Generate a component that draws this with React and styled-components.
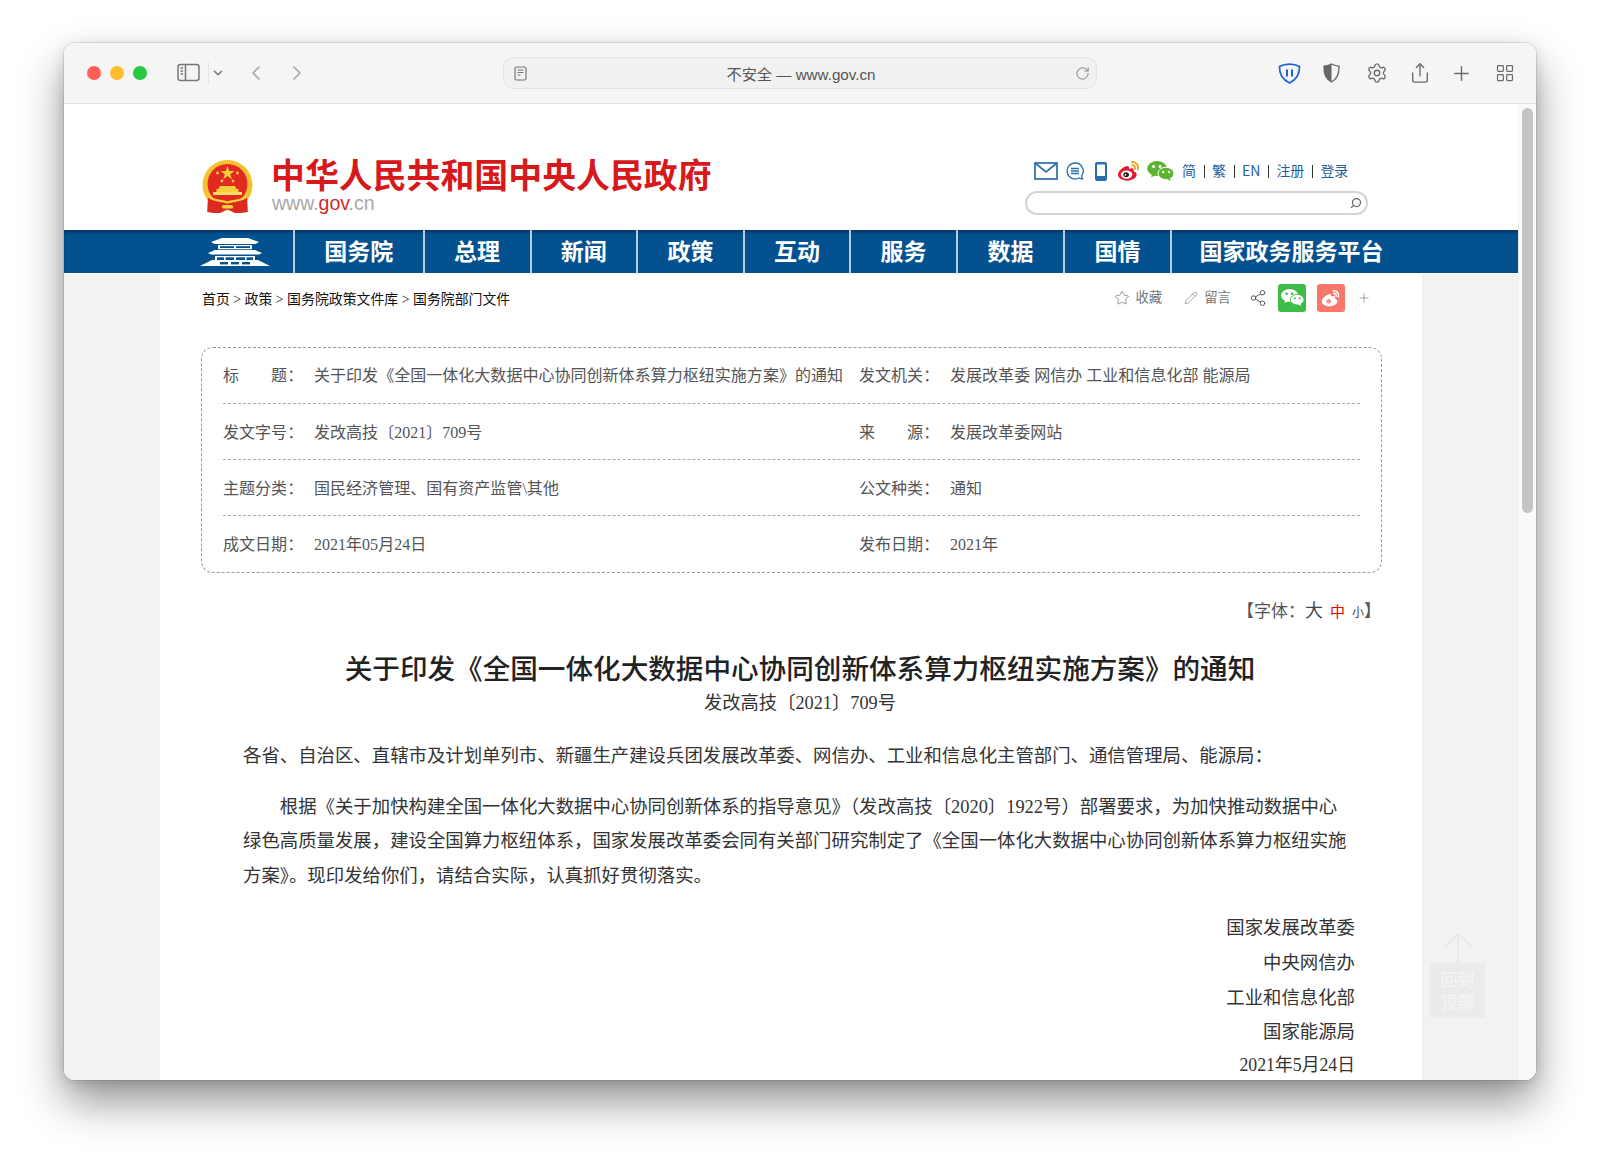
import React from 'react';
import styled, { createGlobalStyle } from 'styled-components';
import { ChevronDown, ChevronLeft, ChevronRight, RotateCw, Settings, Share, Plus, LayoutGrid, Star, Pencil, Share2, Search } from 'lucide-react';

const SERIF = '"Liberation Serif", "Noto Sans CJK SC", serif';
const SANS = '"Liberation Sans", "Noto Sans CJK SC", sans-serif';

// full-width punctuation, kept as escapes so it stays exact
const COLON = '\uFF1A';
const COMMA = '\uFF0C';
const LP = '\uFF08';
const RP = '\uFF09';

const GlobalStyle = createGlobalStyle`
  html, body {
    margin: 0;
    padding: 0;
    background: #ffffff;
  }
  * { box-sizing: border-box; }
`;

const Stage = styled.div`
  width: 1600px;
  height: 1164px;
  padding: 43px 64px 0;
  overflow: hidden;
`;

const Win = styled.div`
  position: relative;
  width: 1472px;
  height: 1037px;
  border-radius: 11px;
  overflow: hidden;
  background: #fff;
  display: flex;
  flex-direction: column;
`;

const Shadow = styled.div`
  border-radius: 11px;
  box-shadow: 0 0 0 1px rgba(0, 0, 0, 0.09), 0 22px 44px rgba(0, 0, 0, 0.42), 0 4px 14px rgba(0, 0, 0, 0.12);
`;

const Toolbar = styled.div`
  flex: none;
  height: 61px;
  background: #f5f5f5;
  border-bottom: 1px solid #dedede;
  display: grid;
  grid-template-columns: 439px 594px 1fr;
  align-items: center;
`;

const LeftTools = styled.div`
  display: flex;
  align-items: center;
  padding-left: 23px;
  color: #777;
`;

const Light = styled.span`
  width: 14px;
  height: 14px;
  border-radius: 50%;
  margin-right: 9px;
  background: ${p => p.$color};
`;

const SidebarBtn = styled.svg`
  margin-left: 21px;
  width: 24px;
  height: 20px;
`;

const VSep = styled.span`
  width: 1px;
  height: 22px;
  background: #e4e4e4;
  margin: 0 2px 0 7px;
`;

const NavArrow = styled.span`
  display: flex;
  color: #a9a9a9;
  margin-left: ${p => p.$ml}px;
`;

const AddressBar = styled.div`
  position: relative;
  height: 32px;
  border: 1px solid #e2e2e2;
  border-radius: 10px;
  background: #f1f1f1;
  display: flex;
  align-items: center;
  justify-content: space-between;
  padding: 0 6px 0 10px;
  color: #777;
`;

const AddressText = styled.span`
  font: 15.2px ${SANS};
  color: #555;
  white-space: nowrap;
`;

const RightTools = styled.div`
  display: flex;
  justify-content: flex-end;
  padding-right: 9px;
  color: #6b6b6b;
`;

const ToolCell = styled.span`
  width: 43.5px;
  display: flex;
  justify-content: center;
  align-items: center;
  transform: translateX(${p => p.$dx || 0}px);
`;

const Body = styled.div`
  flex: 1;
  min-height: 0;
  display: flex;
`;

const Page = styled.div`
  flex: 1;
  min-width: 0;
  overflow: hidden;
  background: #fff;
`;

const ScrollTrack = styled.div`
  flex: none;
  width: 18px;
  background: #fafafa;
  border-left: 1px solid #efefef;
  padding: 4px 3px 0;
`;

const ScrollThumb = styled.div`
  width: 11px;
  height: 405px;
  border-radius: 6px;
  background: #c4c4c4;
`;

const Header = styled.div`
  height: 126px;
  display: flex;
  justify-content: space-between;
  padding: 56px 150px 0 138px;
`;

const Brand = styled.div`
  display: flex;
  gap: 18px;
`;

const BrandText = styled.div`
  display: flex;
  flex-direction: column;
  margin-top: -5px;
`;

const SiteTitle = styled.div`
  font: 700 33.9px/38px "Noto Sans CJK SC", sans-serif;
  color: #d7191c;
  white-space: nowrap;
`;

const SiteUrl = styled.div`
  font: 19.5px/20px ${SANS};
  color: #a8a8a8;
  padding-left: 1px;
  b { font-weight: 400; color: #d2292c; }
`;

const HeaderRight = styled.div`
  width: 343px;
  display: flex;
  flex-direction: column;
  margin-top: 1px;
`;

const TopLinks = styled.div`
  height: 20px;
  display: flex;
  align-items: center;
  padding-left: 9px;
`;

const LinkText = styled.a`
  font: 14px/20px "Noto Sans CJK SC", sans-serif;
  color: #1f5f9f;
  white-space: nowrap;
  margin-top: -2px;
`;

const LinkBar = styled.span`
  width: 1px;
  height: 13px;
  background: #333;
  margin: 0 7.5px;
`;

const SearchBox = styled.div`
  height: 24px;
  margin-top: 10px;
  border: 2px solid #d4d4d4;
  border-radius: 12px;
  display: flex;
  align-items: center;
  justify-content: flex-end;
  padding-right: 4px;
  color: #666;
`;

const Nav = styled.div`
  height: 43px;
  background: #04518f;
  box-shadow: inset 0 3px 3px -1px rgba(0, 20, 50, 0.55);
  display: flex;
  padding-left: 71px;
`;

const NavItem = styled.div`
  width: ${p => p.$w}px;
  border-left: 2px solid ${p => (p.$first ? 'transparent' : '#b9cbdc')};
  display: flex;
  align-items: center;
  justify-content: ${p => (p.$first ? 'flex-end' : 'center')};
  padding: ${p => (p.$first ? '0 23px 0 0' : '0 0 2px')};
  color: #fff;
  font: 700 23px/1 "Noto Sans CJK SC", sans-serif;
  white-space: nowrap;
`;

const Gutter = styled.div`
  background: #f2f2f2;
  padding: 0 96px;
  margin-top: 1px;
`;

const Column = styled.div`
  background: #fff;
  width: 1262px;
  padding: 0 40px 0 41px;
  height: 806px;
`;

const Crumbs = styled.div`
  height: 52px;
  padding-left: 1px;
  padding-right: 11px;
  display: flex;
  align-items: center;
  justify-content: space-between;
`;

const CrumbText = styled.div`
  font: 13.9px/18px ${SERIF};
  color: #111;
`;

const Actions = styled.div`
  display: flex;
  align-items: center;
  color: #888;
  margin-bottom: 4px;
`;

const ActionLabel = styled.span`
  font: 13.4px/18px ${SERIF};
  color: #777;
  margin: 0 ${p => p.$mr || 0}px 0 ${p => p.$ml || 0}px;
`;

const ShareSquare = styled.span`
  width: 28px;
  height: 28px;
  border-radius: 3px;
  margin-left: ${p => p.$ml}px;
  background: ${p => p.$bg};
  display: flex;
  align-items: center;
  justify-content: center;
`;

const InfoBox = styled.div`
  margin-top: 21px;
  height: 226px;
  border: 1px dashed #999;
  border-radius: 12px;
  padding: 0 21px;
`;

const InfoRow = styled.div`
  height: 56px;
  padding-top: ${p => (p.$first ? 1 : 2)}px;
  display: grid;
  grid-template-columns: 91px 545px 91px 1fr;
  align-items: center;
  border-bottom: ${p => (p.$last ? 'none' : '1px dashed #aaa')};
  font: 16.05px/20px ${SERIF};
  color: #555;
  white-space: nowrap;
`;

const FontSwitch = styled.div`
  margin-top: 26px;
  padding-right: 1px;
  height: 24px;
  text-align: right;
  font: 17px/24px ${SERIF};
  color: #555;
`;

const Size = styled.span`
  font-size: ${p => p.$size}px;
  color: ${p => p.$color || '#444'};
  margin-left: ${p => p.$ml || 0}px;
`;

const Heading = styled.h1`
  margin: 28px 0 0;
  padding-left: 17px;
  text-align: center;
  font: 500 27.6px/38px ${SERIF};
  color: #222;
  white-space: nowrap;
`;

const SubHeading = styled.div`
  padding-left: 17px;
  text-align: center;
  font: 18.3px/28px ${SERIF};
  color: #333;
`;

const Article = styled.div`
  padding: 0 27px 0 42px;
  font: 18.4px/34.6px ${SERIF};
  color: #333;
`;

const Para = styled.p`
  margin: ${p => p.$mt}px 0 0;
  text-indent: ${p => (p.$indent ? '2em' : 0)};
  white-space: nowrap;
`;

const Sign = styled.div`
  margin-top: 18px;
  text-align: right;
`;

const SignDate = styled.div`
  margin-top: -2px;
  font-size: 17.8px;
`;

const BackTop = styled.div`
  position: absolute;
  left: 1366px;
  top: 890px;
  width: 55px;
  display: flex;
  flex-direction: column;
  align-items: center;
`;

const BackBox = styled.div`
  width: 55px;
  height: 55px;
  background: #ebebeb;
  color: #f6f6f6;
  text-align: center;
  font: 17px/23px "Noto Sans CJK SC", sans-serif;
  padding-top: 4px;
`;

const WeiboIcon = ({ size = 25, body = '#e6162d', eye = '#222', wave = '#f5a623' }) => (
  <svg width={size} height={size * 0.88} viewBox="0 0 25 22">
    <path d="M10 6.500c-4.500 1.200-9 5.200-9 9 0 3.500 4.500 6 9.500 6 5.500 0 10-3 10-6.300 0-2-1.800-3-3.300-3.400 1-2.400-.5-3.500-2.800-3-1 .2-1.800.6-1.800.6.200-2.500-1-3.400-2.600-2.900z" fill={body} />
    <ellipse cx="10" cy="15.200" rx="6" ry="4.300" fill="#fff" />
    <ellipse cx="9.500" cy="15.400" rx="3" ry="2.600" fill={eye} />
    <circle cx="8.800" cy="15.400" r=".9" fill="#fff" />
    <path d="M15.500 2.300c3.800-.8 7.600 2.800 6.300 7.500M15.800 5.500c2.200-.4 3.700 1.500 3 3.600" fill="none" stroke={wave} strokeWidth="2" strokeLinecap="round" />
  </svg>
);

const WechatIcon = ({ size = 27, color = '#5cb531', eye = '#fff' }) => (
  <svg width={size} height={size * 0.74} viewBox="0 0 27 20">
    <ellipse cx="10" cy="7.500" rx="9.800" ry="7.500" fill={color} />
    <path d="M5 12.500l-.8 4 4.300-2.500z" fill={color} />
    <ellipse cx="19" cy="12.500" rx="8" ry="6.200" fill={color} stroke={eye === '#fff' ? '#fff' : eye} strokeWidth="1" />
    <path d="M22.500 16.500l1.500 3.500-4.500-2.200z" fill={color} />
    <circle cx="6.500" cy="5.500" r="1.500" fill={eye} />
    <circle cx="13" cy="5.500" r="1.500" fill={eye} />
    <circle cx="16.200" cy="11" r="1.200" fill={eye} />
    <circle cx="22" cy="11" r="1.200" fill={eye} />
  </svg>
);

const Emblem = () => (
  <svg width="51" height="53" viewBox="0 0 51 53">
    <circle cx="25.500" cy="25" r="25" fill="#f4c22e" />
    <circle cx="25.500" cy="24" r="20" fill="#e32a22" />
    <polygon points="25.500,6 27.200,11 32.500,11 28.200,14.200 29.800,19.200 25.500,16.100 21.200,19.200 22.800,14.200 18.500,11 23.800,11" fill="#f8cf3a" />
    <circle cx="15.500" cy="13" r="1.400" fill="#f8cf3a" />
    <circle cx="35.500" cy="13" r="1.400" fill="#f8cf3a" />
    <circle cx="20" cy="21" r="1.400" fill="#f8cf3a" />
    <circle cx="31" cy="21" r="1.400" fill="#f8cf3a" />
    <path d="M18 26h15l1.500 3h2v3h-22v-3h2z" fill="#f8cf3a" />
    <rect x="11" y="32" width="29" height="3" fill="#f8dc6a" />
    <path d="M6 36c5 6 12 5 19.500 7 7.500-2 14.500-1 19.500-7l.8 16c-4 1-9 1-12.800 1l-7.500-3.500-7.500 3.500c-3.800 0-8.800 0-12.800-1z" fill="#dd2a20" />
    <path d="M6 36c5 5.500 13 4 19.500 6.500 6.500-2.500 14.500-1 19.500-6.500" fill="none" stroke="#f8cf3a" strokeWidth="2.400" />
    <rect x="20" y="45" width="11" height="3.500" rx="1.500" fill="#f8cf3a" />
  </svg>
);

const GateIcon = () => (
  <svg width="70" height="28" viewBox="0 0 70 28" fill="#fff">
    <path d="M22 0h26l11 4-3.500 2H14.500L11 4z" />
    <rect x="18" y="7" width="34" height="1.200" />
    <rect x="18" y="10" width="34" height="1.200" />
    <rect x="18" y="7" width="2" height="4" />
    <rect x="34" y="7" width="2" height="4" />
    <rect x="50" y="7" width="2" height="4" />
    <path d="M15 12h40l7 3-3 1.500H11L8 15z" />
    <rect x="16" y="18" width="38" height="1.300" />
    <path d="M15 18h2v5h-2zM53 18h2v5h-2zM24 18h1.500v5H24zM34 18h2v5h-2zM45 18h1.500v5H45z" />
    <path d="M12 22h46l12 6H0z" />
    <rect x="20" y="24" width="8" height="2.400" fill="#04518f" />
    <rect x="31" y="24" width="8" height="2.400" fill="#04518f" />
    <rect x="42" y="24" width="8" height="2.400" fill="#04518f" />
  </svg>
);

const NAV = [
  ['', 158, true],
  ['国务院', 129.5],
  ['总理', 107],
  ['新闻', 106.5],
  ['政策', 107],
  ['互动', 106],
  ['服务', 107],
  ['数据', 107],
  ['国情', 107],
  ['国家政务服务平台', 241],
];

const ROWS = [
  ['标\u3000\u3000题' + COLON, '关于印发《全国一体化大数据中心协同创新体系算力枢纽实施方案》的通知', '发文机关' + COLON, '发展改革委 网信办 工业和信息化部 能源局'],
  ['发文字号' + COLON, '发改高技〔2021〕709号', '来\u3000\u3000源' + COLON, '发展改革委网站'],
  ['主题分类' + COLON, '国民经济管理、国有资产监管\\其他', '公文种类' + COLON, '通知'],
  ['成文日期' + COLON, '2021年05月24日', '发布日期' + COLON, '2021年'],
];

const GREETING = '各省、自治区、直辖市及计划单列市、新疆生产建设兵团发展改革委、网信办、工业和信息化主管部门、通信管理局、能源局' + COLON;
const LINE_1 = `根据《关于加快构建全国一体化大数据中心协同创新体系的指导意见》${LP}发改高技〔2020〕1922号${RP}部署要求${COMMA}为加快推动数据中心`;
const LINE_2 = `绿色高质量发展${COMMA}建设全国算力枢纽体系${COMMA}国家发展改革委会同有关部门研究制定了《全国一体化大数据中心协同创新体系算力枢纽实施`;
const LINE_3 = `方案》。现印发给你们${COMMA}请结合实际${COMMA}认真抓好贯彻落实。`;

export default function App() {
  return (
    <Stage>
      <GlobalStyle />
      <Shadow>
        <Win>
          <Toolbar>
            <LeftTools>
              <Light $color="#ff5f57" />
              <Light $color="#febc2e" />
              <Light $color="#28c840" />
              <SidebarBtn viewBox="0 0 24 20" fill="none" stroke="#777" strokeWidth="1.500">
                <rect x="1" y="1.500" width="21" height="16" rx="2.500" />
                <path d="M8.500 1.500v16M3.500 5h2.500M3.500 8h2.500M3.500 11h2.500" />
              </SidebarBtn>
              <VSep />
              <ChevronDown size={14} strokeWidth={2.500} />
              <NavArrow $ml={19}><ChevronLeft size={24} strokeWidth={1.700} /></NavArrow>
              <NavArrow $ml={17}><ChevronRight size={24} strokeWidth={1.700} /></NavArrow>
            </LeftTools>
            <AddressBar>
              <svg width="13" height="15" viewBox="0 0 13 15" fill="none" stroke="#777" strokeWidth="1.200">
                <rect x="1" y="1" width="11" height="13" rx="1.500" />
                <path d="M3.500 4h6M3.500 6.500h6M3.500 9h3" />
              </svg>
              <AddressText>不安全 — www.gov.cn</AddressText>
              <RotateCw size={15} strokeWidth={1.500} />
            </AddressBar>
            <RightTools>
              <ToolCell $dx={2}>
                <svg width="23" height="23" viewBox="0 0 23 23" fill="none">
                  <path d="M1.500 4.500C7 1.200 16 1.200 21.500 4.500c.3 7-3 13-10 16.500-7-3.500-10.300-9.500-10-16.500z" stroke="#1a63e0" strokeWidth="1.700" strokeLinejoin="round" />
                  <path d="M9 7.500v7M14 7.500v7" stroke="#1a63e0" strokeWidth="2" />
                </svg>
              </ToolCell>
              <ToolCell>
                <svg width="17" height="20" viewBox="0 0 17 20" fill="none">
                  <path d="M8.500 1C6 2.200 3.500 3 1 3.200c-.3 7 2 13 7.500 15.800 5.500-2.800 7.800-8.800 7.500-15.800-2.500-.2-5-1-7.500-2.200z" stroke="#666" strokeWidth="1.300" />
                  <path d="M8.500 1C6 2.200 3.500 3 1 3.200c-.3 7 2 13 7.500 15.800z" fill="#666" />
                </svg>
              </ToolCell>
              <ToolCell $dx={2}><Settings size={22} strokeWidth={1.500} /></ToolCell>
              <ToolCell $dx={2}><Share size={22} strokeWidth={1.500} /></ToolCell>
              <ToolCell><Plus size={23} strokeWidth={1.500} /></ToolCell>
              <ToolCell><LayoutGrid size={20} strokeWidth={1.500} /></ToolCell>
            </RightTools>
          </Toolbar>
          <Body>
            <Page>
              <Header>
                <Brand>
                  <Emblem />
                  <BrandText>
                    <SiteTitle>中华人民共和国中央人民政府</SiteTitle>
                    <SiteUrl>www.<b>gov</b>.cn</SiteUrl>
                  </BrandText>
                </Brand>
                <HeaderRight>
                  <TopLinks>
                    <svg width="24" height="18" viewBox="0 0 24 18" fill="none" stroke="#2a6eab" strokeWidth="1.700">
                      <rect x="1" y="1" width="22" height="16" />
                      <path d="M1 1l11 9 11-9" />
                    </svg>
                    <svg style={{ marginLeft: 8 }} width="18" height="18" viewBox="0 0 18 18" fill="none" stroke="#2a6eab" strokeWidth="1.300">
                      <path d="M9 1a8 8 0 1 0 4 15l3.500 1-1-3A8 8 0 0 0 9 1z" />
                      <path d="M5 6.500h8M5 9h8M5 11.500h8" />
                    </svg>
                    <svg style={{ marginLeft: 11 }} width="12" height="19" viewBox="0 0 12 19" fill="#2a6eab">
                      <path d="M2 0h8a2 2 0 0 1 2 2v15a2 2 0 0 1-2 2H2a2 2 0 0 1-2-2V2a2 2 0 0 1 2-2zm0 2.500v11.500h8V2.500z" />
                    </svg>
                    <span style={{ width: 10 }} />
                    <WeiboIcon size={24} />
                    <span style={{ width: 6 }} />
                    <WechatIcon size={27} />
                    <span style={{ width: 8 }} />
                    <LinkText>简</LinkText><LinkBar />
                    <LinkText>繁</LinkText><LinkBar />
                    <LinkText>EN</LinkText><LinkBar />
                    <LinkText>注册</LinkText><LinkBar />
                    <LinkText>登录</LinkText>
                  </TopLinks>
                  <SearchBox><Search size={12} strokeWidth={2.500} style={{ transform: 'scaleX(-1)' }} /></SearchBox>
                </HeaderRight>
              </Header>
              <Nav>
                {NAV.map(([label, w, first], i) => (
                  <NavItem key={i} $w={w} $first={first}>
                    {first ? <GateIcon /> : label}
                  </NavItem>
                ))}
              </Nav>
              <Gutter>
                <Column>
                  <Crumbs>
                    <CrumbText>首页 &gt; 政策 &gt; 国务院政策文件库 &gt; 国务院部门文件</CrumbText>
                    <Actions>
                      <Star size={16} strokeWidth={1.300} />
                      <ActionLabel $ml={5} $mr={22}>收藏</ActionLabel>
                      <Pencil size={14} strokeWidth={1.300} />
                      <ActionLabel $ml={6} $mr={18}>留言</ActionLabel>
                      <Share2 size={18} strokeWidth={1.300} color="#555" />
                      <ShareSquare $ml={11} $bg="#3fbb47"><WechatIcon size={23} color="#fff" eye="#3fbb47" /></ShareSquare>
                      <ShareSquare $ml={11} $bg="#f8766a"><WeiboIcon size={20} body="#fff" eye="#f8766a" wave="#fff" /></ShareSquare>
                      <Plus style={{ marginLeft: 12 }} size={14} strokeWidth={1.300} />
                    </Actions>
                  </Crumbs>
                  <InfoBox>
                    {ROWS.map((row, i) => (
                      <InfoRow key={i} $first={i === 0} $last={i === ROWS.length - 1}>
                        {row.map((cell, j) => <span key={j}>{cell}</span>)}
                      </InfoRow>
                    ))}
                  </InfoBox>
                  <FontSwitch>
                    {'【字体' + COLON}<Size $size={18}>大</Size><Size $size={15} $color="#e60000" $ml={7}>中</Size><Size $size={12} $ml={7}>小</Size>】
                  </FontSwitch>
                  <Heading>关于印发《全国一体化大数据中心协同创新体系算力枢纽实施方案》的通知</Heading>
                  <SubHeading>发改高技〔2021〕709号</SubHeading>
                  <Article>
                    <Para $mt={22}>{GREETING}</Para>
                    <Para $mt={16} $indent>
                      {LINE_1}<br />
                      {LINE_2}<br />
                      {LINE_3}
                    </Para>
                    <Sign>
                      国家发展改革委<br />
                      中央网信办<br />
                      工业和信息化部<br />
                      国家能源局
                      <SignDate>2021年5月24日</SignDate>
                    </Sign>
                  </Article>
                </Column>
              </Gutter>
            </Page>
            <ScrollTrack><ScrollThumb /></ScrollTrack>
          </Body>
          <BackTop>
            <svg width="30" height="30" viewBox="0 0 30 30" fill="none" stroke="#e6e6e6" strokeWidth="1.500">
              <path d="M15 30V1M1 14L15 1l14 13" />
            </svg>
            <BackBox>回到<br />顶部</BackBox>
          </BackTop>
        </Win>
      </Shadow>
    </Stage>
  );
}
